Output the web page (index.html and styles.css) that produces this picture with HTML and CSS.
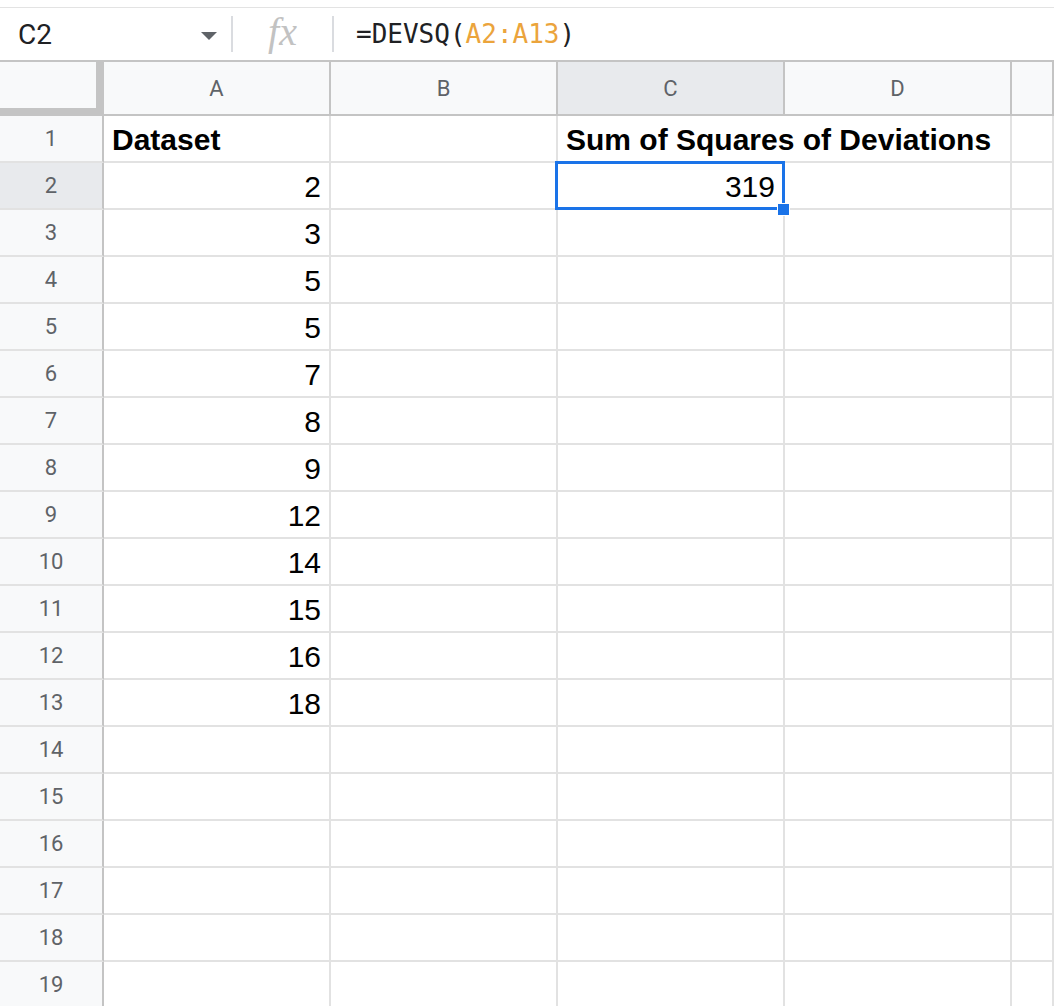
FILE: index.html
```html
<!DOCTYPE html>
<html lang="en">
<head>
    <meta charset="UTF-8">
    <meta name="viewport" content="width=device-width, initial-scale=1.0">
    <title>DEVSQ - Sheet</title>
    <link rel="stylesheet" href="styles.css">
</head>
<body>
    <div class="formula-bar">
        <div class="name-box">
            <span class="name">C2</span>
            <span class="arrow"></span>
        </div>
        <div class="sep"></div>
        <div class="fx">fx</div>
        <div class="sep"></div>
        <div class="formula">=DEVSQ(<span class="ref">A2:A13</span>)</div>
    </div>

    <div class="sheet">
        <div class="row head">
            <div class="corner"></div>
            <div class="col-head">A</div>
            <div class="col-head">B</div>
            <div class="col-head active">C</div>
            <div class="col-head">D</div>
            <div class="col-head"></div>
        </div>
        <div class="row">
            <div class="row-head">1</div>
            <div class="cell bold">Dataset</div>
            <div class="cell"></div>
            <div class="cell bold wide">Sum of Squares of Deviations</div>
            <div class="cell"></div>
            <div class="cell"></div>
        </div>
        <div class="row">
            <div class="row-head active">2</div>
            <div class="cell num">2</div>
            <div class="cell"></div>
            <div class="cell num selected">319<span class="handle"></span></div>
            <div class="cell"></div>
            <div class="cell"></div>
        </div>
        <div class="row"><div class="row-head">3</div><div class="cell num">3</div><div class="cell"></div><div class="cell"></div><div class="cell"></div><div class="cell"></div></div>
        <div class="row"><div class="row-head">4</div><div class="cell num">5</div><div class="cell"></div><div class="cell"></div><div class="cell"></div><div class="cell"></div></div>
        <div class="row"><div class="row-head">5</div><div class="cell num">5</div><div class="cell"></div><div class="cell"></div><div class="cell"></div><div class="cell"></div></div>
        <div class="row"><div class="row-head">6</div><div class="cell num">7</div><div class="cell"></div><div class="cell"></div><div class="cell"></div><div class="cell"></div></div>
        <div class="row"><div class="row-head">7</div><div class="cell num">8</div><div class="cell"></div><div class="cell"></div><div class="cell"></div><div class="cell"></div></div>
        <div class="row"><div class="row-head">8</div><div class="cell num">9</div><div class="cell"></div><div class="cell"></div><div class="cell"></div><div class="cell"></div></div>
        <div class="row"><div class="row-head">9</div><div class="cell num">12</div><div class="cell"></div><div class="cell"></div><div class="cell"></div><div class="cell"></div></div>
        <div class="row"><div class="row-head">10</div><div class="cell num">14</div><div class="cell"></div><div class="cell"></div><div class="cell"></div><div class="cell"></div></div>
        <div class="row"><div class="row-head">11</div><div class="cell num">15</div><div class="cell"></div><div class="cell"></div><div class="cell"></div><div class="cell"></div></div>
        <div class="row"><div class="row-head">12</div><div class="cell num">16</div><div class="cell"></div><div class="cell"></div><div class="cell"></div><div class="cell"></div></div>
        <div class="row"><div class="row-head">13</div><div class="cell num">18</div><div class="cell"></div><div class="cell"></div><div class="cell"></div><div class="cell"></div></div>
        <div class="row"><div class="row-head">14</div><div class="cell"></div><div class="cell"></div><div class="cell"></div><div class="cell"></div><div class="cell"></div></div>
        <div class="row"><div class="row-head">15</div><div class="cell"></div><div class="cell"></div><div class="cell"></div><div class="cell"></div><div class="cell"></div></div>
        <div class="row"><div class="row-head">16</div><div class="cell"></div><div class="cell"></div><div class="cell"></div><div class="cell"></div><div class="cell"></div></div>
        <div class="row"><div class="row-head">17</div><div class="cell"></div><div class="cell"></div><div class="cell"></div><div class="cell"></div><div class="cell"></div></div>
        <div class="row"><div class="row-head">18</div><div class="cell"></div><div class="cell"></div><div class="cell"></div><div class="cell"></div><div class="cell"></div></div>
        <div class="row"><div class="row-head">19</div><div class="cell"></div><div class="cell"></div><div class="cell"></div><div class="cell"></div><div class="cell"></div></div>
    </div>
</body>
</html>
```

FILE: styles.css
```css
body {
    margin: 0;
    padding: 0;
    width: 1054px;
    height: 1006px;
    overflow: hidden;
    background-color: #ffffff;
    font-family: Roboto, Arial, sans-serif;
}

.formula-bar {
    display: flex;
    align-items: center;
    height: 52px;
    margin-top: 7px;
    border-top: 1px solid #e3e3e3;
    border-bottom: 2px solid #c4c4c4;
}

.name-box {
    display: flex;
    align-items: center;
    width: 231px;
    box-sizing: border-box;
    padding-left: 18px;
    padding-right: 14px;
}

.name {
    font-size: 28px;
    color: #202124;
    flex: 1;
}

.arrow {
    width: 0;
    height: 0;
    border-left: 8px solid transparent;
    border-right: 8px solid transparent;
    border-top: 8px solid #5f6368;
    margin-top: 3px;
}

.sep {
    width: 2px;
    height: 36px;
    background-color: #dadce0;
}

.fx {
    width: 99px;
    text-align: center;
    font-family: "Liberation Serif", serif;
    font-style: italic;
    font-size: 40px;
    color: #c2c2c2;
    line-height: 1;
    margin-top: -4px;
}

.formula {
    padding-left: 22px;
    font-family: "DejaVu Sans Mono", monospace;
    font-size: 26px;
    color: #202124;
}

.formula .ref {
    color: #eba43c;
}

.row {
    display: grid;
    grid-template-columns: 104px 227px 227px 227px 227px 1fr;
    height: 47px;
}

.row.head {
    height: 54px;
}

.corner {
    background-color: #f8f9fa;
    border-right: 8px solid #c4c4c4;
    border-bottom: 8px solid #c4c4c4;
    margin-left: -2px;
}

.col-head {
    display: flex;
    align-items: center;
    justify-content: center;
    background-color: #f8f9fa;
    border-right: 2px solid #c4c4c4;
    border-bottom: 2px solid #c4c4c4;
    color: #5f6368;
    font-size: 22px;
}

.col-head.active,
.row-head.active {
    background-color: #e8eaed;
}

.row-head {
    display: flex;
    align-items: center;
    justify-content: center;
    background-color: #f8f9fa;
    border-right: 2px solid #c4c4c4;
    border-bottom: 2px solid #e2e2e2;
    color: #5f6368;
    font-size: 22px;
}

.cell {
    position: relative;
    display: flex;
    align-items: flex-end;
    padding: 0 8px 6px 8px;
    border-right: 2px solid #e2e2e2;
    border-bottom: 2px solid #e2e2e2;
    font-family: "Liberation Sans", Arial, sans-serif;
    font-size: 30px;
    line-height: 1;
    color: #000000;
    white-space: nowrap;
}

.cell.bold {
    font-weight: bold;
}

/* text spills into D1, so the gridline between them is hidden */
.cell.wide {
    border-right-color: transparent;
    z-index: 1;
}

.cell.num {
    justify-content: flex-end;
}

.cell.selected {
    z-index: 2;
}

.cell.selected::after {
    content: "";
    position: absolute;
    top: -2px;
    left: -3px;
    right: -2px;
    bottom: -2px;
    border: 3px solid #1a73e8;
}

.handle {
    position: absolute;
    right: -7px;
    bottom: -8px;
    width: 11px;
    height: 11px;
    background-color: #1a73e8;
    border: 1px solid #ffffff;
    z-index: 3;
}
```
